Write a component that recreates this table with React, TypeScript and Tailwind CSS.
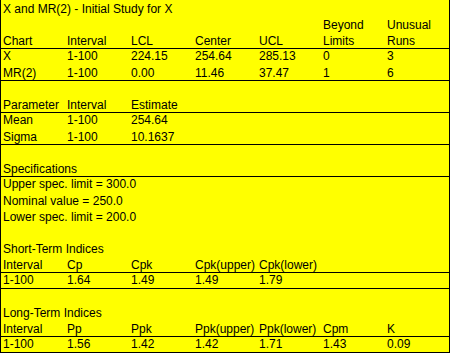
import React from "react";

type Row = { cells: string[]; top?: boolean };

const rows: Row[] = [
  { cells: ["X and MR(2) - Initial Study for X"] },
  { cells: ["", "", "", "", "", "Beyond", "Unusual"] },
  { cells: ["Chart", "Interval", "LCL", "Center", "UCL", "Limits", "Runs"] },
  { cells: ["X", "1-100", "224.15", "254.64", "285.13", "0", "3"], top: true },
  { cells: ["MR(2)", "1-100", "0.00", "11.46", "37.47", "1", "6"] },
  { cells: [""], top: true },
  { cells: ["Parameter", "Interval", "Estimate"] },
  { cells: ["Mean", "1-100", "254.64"], top: true },
  { cells: ["Sigma", "1-100", "10.1637"] },
  { cells: [""], top: true },
  { cells: ["Specifications"] },
  { cells: ["Upper spec. limit = 300.0"], top: true },
  { cells: ["Nominal value = 250.0"] },
  { cells: ["Lower spec. limit = 200.0"] },
  { cells: [""] },
  { cells: ["Short-Term Indices"] },
  { cells: ["Interval", "Cp", "Cpk", "Cpk(upper)", "Cpk(lower)"] },
  { cells: ["1-100", "1.64", "1.49", "1.49", "1.79"], top: true },
  { cells: [""], top: true },
  { cells: ["Long-Term Indices"] },
  { cells: ["Interval", "Pp", "Ppk", "Ppk(upper)", "Ppk(lower)", "Cpm", "K"] },
  { cells: ["1-100", "1.56", "1.42", "1.42", "1.71", "1.43", "0.09"], top: true },
];

export default function App() {
  return (
    <div
      className="w-[450px] bg-[#ffff00] text-black border-l border-r border-b border-black text-[12px]"
      style={{ fontFamily: '"Liberation Sans", Arial, sans-serif' }}
    >
      {rows.map((r, i) => (
        <div
          key={i}
          className={
            r.top
              ? "h-[16px] box-border border-t border-black flex leading-[15px] whitespace-nowrap"
              : "h-[16px] flex leading-[16px] pt-px whitespace-nowrap"
          }
        >
          {r.cells.length === 1 ? (
            <div className="pl-[2px]">{r.cells[0]}</div>
          ) : (
            r.cells.map((c, j) => (
              <div key={j} className="w-[64px] shrink-0 pl-[2px] overflow-visible">
                {c}
              </div>
            ))
          )}
        </div>
      ))}
    </div>
  );
}
